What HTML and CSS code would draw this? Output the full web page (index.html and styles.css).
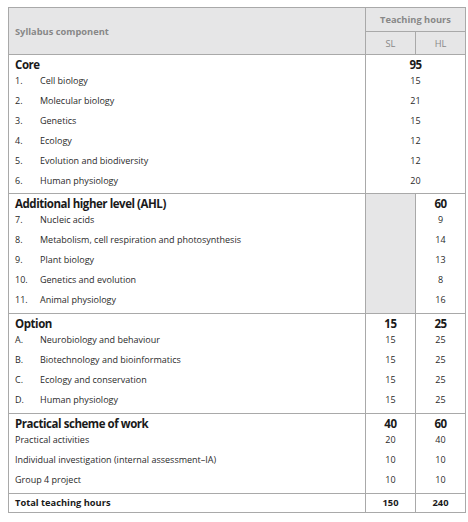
FILE: index.html
```html
<!DOCTYPE html>
<html>
<head>
<meta charset="utf-8">
<link rel="stylesheet" href="styles.css">
</head>
<body>
<table class="syl">
  <colgroup>
    <col class="c-comp">
    <col class="c-sl">
    <col class="c-hl">
  </colgroup>
  <thead>
    <tr class="h1">
      <th rowspan="2" class="h-comp">Syllabus component</th>
      <th colspan="2" class="h-teach">Teaching hours</th>
    </tr>
    <tr class="h2">
      <th class="h-sub">SL</th>
      <th class="h-sub">HL</th>
    </tr>
  </thead>
  <tbody class="sec core">
    <tr class="title"><td>Core</td><td colspan="2" class="num">95</td></tr>
    <tr class="item"><td><span class="n">1.</span>Cell biology</td><td colspan="2" class="num">15</td></tr>
    <tr class="item"><td><span class="n">2.</span>Molecular biology</td><td colspan="2" class="num">21</td></tr>
    <tr class="item"><td><span class="n">3.</span>Genetics</td><td colspan="2" class="num">15</td></tr>
    <tr class="item"><td><span class="n">4.</span>Ecology</td><td colspan="2" class="num">12</td></tr>
    <tr class="item"><td><span class="n">5.</span>Evolution and biodiversity</td><td colspan="2" class="num">12</td></tr>
    <tr class="item last"><td><span class="n">6.</span>Human physiology</td><td colspan="2" class="num">20</td></tr>
  </tbody>
  <tbody class="sec">
    <tr class="title"><td>Additional higher level (AHL)</td><td rowspan="6" class="shade"></td><td class="num">60</td></tr>
    <tr class="item"><td><span class="n">7.</span>Nucleic acids</td><td class="num">9</td></tr>
    <tr class="item"><td><span class="n">8.</span>Metabolism, cell respiration and photosynthesis</td><td class="num">14</td></tr>
    <tr class="item"><td><span class="n">9.</span>Plant biology</td><td class="num">13</td></tr>
    <tr class="item"><td><span class="n">10.</span>Genetics and evolution</td><td class="num">8</td></tr>
    <tr class="item last"><td><span class="n">11.</span>Animal physiology</td><td class="num">16</td></tr>
  </tbody>
  <tbody class="sec">
    <tr class="title"><td>Option</td><td class="num">15</td><td class="num">25</td></tr>
    <tr class="item"><td><span class="n">A.</span>Neurobiology and behaviour</td><td class="num">15</td><td class="num">25</td></tr>
    <tr class="item"><td><span class="n">B.</span>Biotechnology and bioinformatics</td><td class="num">15</td><td class="num">25</td></tr>
    <tr class="item"><td><span class="n">C.</span>Ecology and conservation</td><td class="num">15</td><td class="num">25</td></tr>
    <tr class="item last"><td><span class="n">D.</span>Human physiology</td><td class="num">15</td><td class="num">25</td></tr>
  </tbody>
  <tbody class="sec">
    <tr class="title"><td>Practical scheme of work</td><td class="num">40</td><td class="num">60</td></tr>
    <tr class="item"><td>Practical activities</td><td class="num">20</td><td class="num">40</td></tr>
    <tr class="item"><td>Individual investigation (internal assessment–IA)</td><td class="num">10</td><td class="num">10</td></tr>
    <tr class="item last"><td>Group 4 project</td><td class="num">10</td><td class="num">10</td></tr>
  </tbody>
  <tbody class="sec">
    <tr class="total"><td>Total teaching hours</td><td class="num">150</td><td class="num">240</td></tr>
  </tbody>
</table>
</body>
</html>
```

FILE: styles.css
```css
html, body {
  margin: 0;
  padding: 0;
  background: #ffffff;
}
body {
  padding: 7px 0 0 8px;
  font-family: "Open Sans", "Noto Sans", sans-serif;
  color: #2a2a2a;
}
.syl {
  border-collapse: collapse;
  width: 458px;
  table-layout: fixed;
  border: 1px solid #a9a9a9;
}
.c-comp { width: 357px; }
.c-sl { width: 50px; }
.c-hl { width: 50px; }

.syl th, .syl td {
  padding: 0;
  border-left: 1px solid #a9a9a9;
  border-right: 1px solid #a9a9a9;
}
.syl thead th {
  background: #e6e6e7;
  color: #888888;
  font-size: 9.3px;
  border: 1px solid #a9a9a9;
}
.syl .h1 { height: 24px; }
.syl .h2 { height: 23px; }
.syl .h-comp {
  text-align: left;
  padding-left: 6px;
  font-weight: 700;
}
.syl .h-teach { font-weight: 700; }
.syl .h-sub { font-weight: 400; }

.sec { border-top: 1px solid #a9a9a9; }

.syl .title td {
  font-weight: 700;
  font-size: 11.5px;
  letter-spacing: -0.45px;
  color: #1a1a1a;
  line-height: 12px;
  padding-top: 4px;
  vertical-align: top;
}
.syl .title td:first-child { padding-left: 6px; }
.syl .item td {
  font-size: 9px;
  line-height: 20px;
  vertical-align: middle;
}
.syl .item td:first-child { padding-left: 6px; }
.syl .item.last td { padding-bottom: 3px; }
.syl .core .item.last td { padding-bottom: 2px; }
.n {
  display: inline-block;
  width: 25px;
}
.num { text-align: center; }
.shade { background: #e6e6e7; }

.syl .total td {
  font-weight: 700;
  font-size: 9.3px;
  color: #1a1a1a;
  line-height: 18px;
  vertical-align: middle;
}
.syl .total td:first-child { padding-left: 6px; }
```
